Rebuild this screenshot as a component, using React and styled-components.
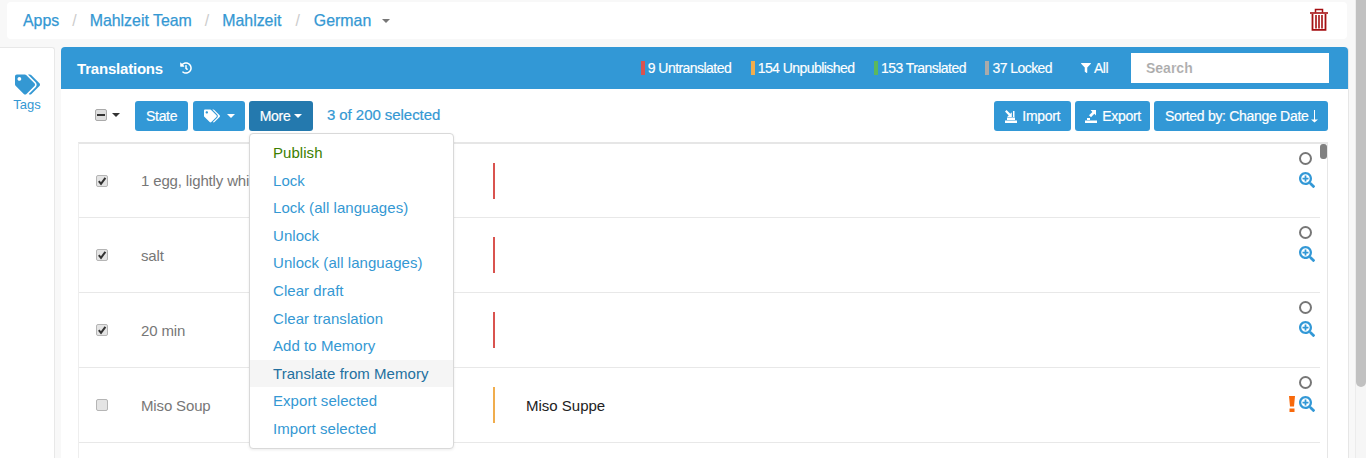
import React from 'react';
import styled, { createGlobalStyle } from 'styled-components';
import { FaTags, FaHistory, FaSearchPlus, FaFilter } from 'react-icons/fa';

const GlobalStyle = createGlobalStyle`
  html, body {
    margin: 0;
    padding: 0;
    height: 458px;
    overflow: hidden;
    background: #f8f8f8;
    font-family: "Liberation Sans", Arial, sans-serif;
    font-size: 15px;
    color: #333;
  }
  * { box-sizing: border-box; }
`;

const Page = styled.div`
  display: flex;
  height: 458px;
  overflow: hidden;
`;

const Content = styled.div`
  width: 1355px;
  flex: none;
  padding-top: 2px;
`;

const PageScroll = styled.div`
  flex: 1;
  background: #f6f6f6;
  border-left: 1px solid #ececec;
`;

const PageThumb = styled.div`
  width: 10px;
  height: 387px;
  background: #c1c1c1;
  border-radius: 0 0 5px 5px;
`;

const Breadcrumb = styled.nav`
  height: 37px;
  margin: 0 8px 0 7px;
  padding: 0 16px;
  background: #fff;
  border-radius: 4px;
  display: flex;
  align-items: center;
  font-size: 15.9px;
  color: #3498d3;
`;

const Crumb = styled.a`
  color: #3498d3;
  -webkit-text-stroke: 0.25px #3498d3;
`;

const Slash = styled.span`
  color: #ccc;
  margin: 0 ${p => p.$gap || 13}px;
`;

const Caret = styled.span`
  display: inline-block;
  width: 0;
  height: 0;
  border-left: 4px solid transparent;
  border-right: 4px solid transparent;
  border-top: 4px solid ${p => p.$color || '#fff'};
  margin-left: ${p => p.$gap || 4}px;
`;

const TrashButton = styled.a`
  margin-left: auto;
  margin-right: 3px;
  margin-top: -3px;
  display: flex;
`;

const Body = styled.div`
  display: flex;
  margin-top: 8px;
  height: 411px;
`;

const Sidebar = styled.aside`
  width: 55px;
  flex: none;
  background: #fff;
  border: 1px solid #e8e8e8;
  border-left: 0;
  border-bottom: 0;
  border-radius: 0 3px 0 0;
  padding-top: 24px;
  display: flex;
  flex-direction: column;
  align-items: center;
  color: #3498d3;
  font-size: 13px;
  margin-right: 6px;
`;

const Panel = styled.section`
  width: 1288px;
  flex: none;
  background: #fff;
  border-right: 1px solid #e6e6e6;
  border-radius: 4px 4px 0 0;
`;

const PanelHead = styled.header`
  height: 42px;
  background: #3298d6;
  border-radius: 4px 4px 0 0;
  padding: 0 19px 0 16px;
  display: flex;
  align-items: center;
  color: #fff;
`;

const Title = styled.h2`
  margin: 0 17px 0 0;
  font-size: 15px;
  font-weight: 700;
  letter-spacing: -0.2px;
`;

const Stats = styled.div`
  margin-left: auto;
  display: flex;
  align-items: center;
  font-size: 14px;
  letter-spacing: -0.55px;
  -webkit-text-stroke: 0.15px #fff;
`;

const Stat = styled.span`
  border-left: 4px solid ${p => p.$color};
  padding-left: 3px;
  margin-right: 19.5px;
  line-height: 14px;
`;

const AllFilter = styled.span`
  display: flex;
  align-items: center;
  gap: 3px;
  margin-left: 9.5px;
  margin-right: 23px;
`;

const Search = styled.input`
  width: 198px;
  height: 30px;
  border: 0;
  padding: 0 15px;
  font: 700 14px "Liberation Sans", Arial, sans-serif;
  background: #fff;
  &::placeholder { color: #aaa; opacity: 1; }
`;

const Toolbar = styled.div`
  height: 53px;
  padding: 12px 21px 0 34px;
  display: flex;
  align-items: flex-start;
  position: relative;
`;

const SelectAll = styled.div`
  display: flex;
  align-items: center;
  height: 28px;
  margin-right: 15px;
`;

const Minus = styled.span`
  width: 12px;
  height: 12px;
  border-radius: 2px;
  background: #dedede;
  border: 1px solid #aaa;
  display: flex;
  align-items: center;
  justify-content: center;
  margin-right: 1px;
  &::after {
    content: '';
    width: 8px;
    height: 2px;
    background: #333;
  }
`;

const Btn = styled.button`
  height: 30px;
  border: 0;
  border-radius: 3px;
  padding: 0 ${p => p.$pad || 10.5}px;
  margin-right: ${p => p.$mr ?? 5}px;
  background: ${p => (p.$active ? '#2479ae' : '#3298d6')};
  color: #fff;
  font: 14px "Liberation Sans", Arial, sans-serif;
  letter-spacing: -0.3px;
  display: flex;
  align-items: center;
  -webkit-text-stroke: 0.2px #fff;
`;

const Selected = styled.span`
  margin-left: 9px;
  line-height: 28px;
  letter-spacing: -0.05px;
  color: #3498d3;
  -webkit-text-stroke: 0.2px #3498d3;
`;

const Right = styled.div`
  margin-left: auto;
  margin-right: -1px;
  display: flex;
`;

const Menu = styled.ul`
  position: absolute;
  left: 188px;
  top: 44px;
  width: 205px;
  margin: 0;
  padding: 5px 0;
  list-style: none;
  background: #fff;
  border: 1px solid #d9d9d9;
  border-radius: 4px;
  box-shadow: 0 1px 3px rgba(0, 0, 0, 0.08);
  z-index: 5;
`;

const MenuItem = styled.li`
  height: 27.6px;
  line-height: 28.5px;
  padding-left: 23px;
  white-space: nowrap;
  letter-spacing: 0.05px;
  color: ${p => (p.$green ? '#3c8000' : p.$hover ? '#23709f' : '#3498d3')};
  background: ${p => (p.$hover ? '#f5f5f5' : 'transparent')};
`;

const List = styled.div`
  margin: 0 20px 0 17px;
  border-top: 2px solid #e6e6e6;
  border-left: 1px solid #eee;
  border-right: 1px solid #e6e6e6;
  height: 316px;
  display: flex;
`;

const Rows = styled.div`
  flex: 1;
  min-width: 0;
`;

const Row = styled.div`
  height: 75px;
  border-bottom: 1px solid #e8e8e8;
  display: flex;
  align-items: center;
  &:first-child { height: 74px; }
`;

const CheckCell = styled.div`
  width: 62px;
  flex: none;
  padding-left: 17px;
  display: flex;
`;

const Check = styled.span`
  width: 12px;
  height: 12px;
  border-radius: 2px;
  background: #e4e4e4;
  border: 1px solid #b5b5b5;
  display: flex;
`;

const Source = styled.div`
  width: 352px;
  flex: none;
  letter-spacing: -0.15px;
  color: #777;
`;

const Bar = styled.span`
  width: 2px;
  height: 36px;
  flex: none;
  background: ${p => p.$color};
`;

const Target = styled.div`
  flex: 1;
  padding-left: 31px;
  color: #222;
`;

const Actions = styled.div`
  width: 40px;
  flex: none;
  padding-right: 5px;
  display: flex;
  flex-direction: column;
  align-items: flex-end;
  gap: 7px;
  margin-top: -22px;
`;

const Ring = styled.span`
  width: 13px;
  height: 13px;
  border: 2px solid #777;
  border-radius: 50%;
  margin-right: 3px;
`;

const Zoomers = styled.div`
  display: flex;
  align-items: center;
  gap: 4px;
  color: #3298d6;
`;

const ListScroll = styled.div`
  width: 7px;
  flex: none;
`;

const ListThumb = styled.div`
  height: 15px;
  background: #808080;
  border-radius: 3px;
`;

const TrashIcon = () => (
  <svg width="18" height="23" viewBox="0 0 18 23" fill="none" stroke="#a50f12">
    <path d="M0 5h18" strokeWidth="1.6" />
    <path d="M5.500 4.500V1.500h7v3" strokeWidth="1.500" />
    <path d="M2.500 6v15.800h13V6" strokeWidth="1.800" />
    <path d="M6 7v13.500M9 7v13.500M12 7v13.500" strokeWidth="1.600" />
  </svg>
);

const TickIcon = () => (
  <svg width="10" height="10" viewBox="0 0 10 10">
    <path d="M1.800 5.200 4 7.800 8.400 1.800" fill="none" stroke="#333" strokeWidth="2" />
  </svg>
);

const WarnIcon = () => (
  <svg width="6" height="16" viewBox="0 0 6 16" fill="#f8690b">
    <path d="M0 0h6L5 10.500H1zM0.500 12.500h5V16h-5z" />
  </svg>
);

const ImportIcon = () => (
  <svg width="14" height="14" viewBox="0 0 14 14" fill="#fff" style={{ marginRight: 4 }}>
    <path d="M1 11.500h12V14H1zM3 8.500h8V11H3z" />
    <path d="M2.500 1 6.300 4.800 7.800 3.300V8H3.100l1.600-1.600L1 2.500z" />
    <path d="M9 2h1.500v6H9z" />
  </svg>
);

const ExportIcon = () => (
  <svg width="14" height="14" viewBox="0 0 14 14" fill="#fff" style={{ marginRight: 4 }}>
    <path d="M1 11.500h12V14H1zM3 9h3v2H3z" />
    <path d="M12 1v5.500l-1.700-1.700-3.300 3.500-2-2 3.400-3.400L6.600 1z" />
  </svg>
);

const ArrowDown = () => (
  <svg width="7" height="14" viewBox="0 0 7 14" fill="#fff" style={{ marginLeft: 2 }}>
    <path d="M3 1h1v9.500h3L3.500 13.500 0 10.500h3z" />
  </svg>
);

// first row is cut by the open menu in the picture, only the visible part is kept
const rows = [
  { text: '1 egg, lightly whi', bar: '#d9534f', checked: true },
  { text: 'salt', bar: '#d9534f', checked: true },
  { text: '20 min', bar: '#d9534f', checked: true },
  { text: 'Miso Soup', bar: '#f0ad4e', target: 'Miso Suppe', warn: true },
];

const menu = [
  'Lock',
  'Lock (all languages)',
  'Unlock',
  'Unlock (all languages)',
  'Clear draft',
  'Clear translation',
  'Add to Memory',
];

export default function App() {
  return (
    <Page>
      <GlobalStyle />
      <Content>
        <Breadcrumb>
          <Crumb>Apps</Crumb>
          <Slash>/</Slash>
          <Crumb>Mahlzeit Team</Crumb>
          <Slash>/</Slash>
          <Crumb>Mahlzeit</Crumb>
          <Slash $gap={14}>/</Slash>
          <Crumb>German</Crumb>
          <Caret $color="#777" $gap={11} />
          <TrashButton>
            <TrashIcon />
          </TrashButton>
        </Breadcrumb>
        <Body>
          <Sidebar>
            <FaTags size={25} />
            <span>Tags</span>
          </Sidebar>
          <Panel>
            <PanelHead>
              <Title>Translations</Title>
              <FaHistory size={12} />
              <Stats>
                <Stat $color="#d9534f">9 Untranslated</Stat>
                <Stat $color="#f0ad4e">154 Unpublished</Stat>
                <Stat $color="#5cb85c">153 Translated</Stat>
                <Stat $color="#aaa">37 Locked</Stat>
                <AllFilter>
                  <FaFilter size={10} />
                  All
                </AllFilter>
                <Search placeholder="Search" />
              </Stats>
            </PanelHead>
            <Toolbar>
              <SelectAll>
                <Minus />
                <Caret $color="#333" />
              </SelectAll>
              <Btn $pad={11}>State</Btn>
              <Btn $mr={4}>
                <FaTags size={16} />
                <Caret $gap={7} />
              </Btn>
              <Btn $active>
                More
                <Caret />
              </Btn>
              <Selected>3 of 200 selected</Selected>
              <Right>
                <Btn $mr={4}>
                  <ImportIcon />
                  Import
                </Btn>
                <Btn $pad={9.5} $mr={4}>
                  <ExportIcon />
                  Export
                </Btn>
                <Btn $mr={0}>
                  Sorted by: Change Date
                  <ArrowDown />
                </Btn>
              </Right>
              <Menu>
                <MenuItem $green>Publish</MenuItem>
                {menu.map(m => (
                  <MenuItem key={m}>{m}</MenuItem>
                ))}
                <MenuItem $hover>Translate from Memory</MenuItem>
                <MenuItem>Export selected</MenuItem>
                <MenuItem>Import selected</MenuItem>
              </Menu>
            </Toolbar>
            <List>
              <Rows>
                {rows.map(r => (
                  <Row key={r.text}>
                    <CheckCell>
                      <Check>{r.checked && <TickIcon />}</Check>
                    </CheckCell>
                    <Source>{r.text}</Source>
                    <Bar $color={r.bar} />
                    <Target>{r.target}</Target>
                    <Actions>
                      <Ring />
                      <Zoomers>
                        {r.warn && <WarnIcon />}
                        <FaSearchPlus size={16} />
                      </Zoomers>
                    </Actions>
                  </Row>
                ))}
              </Rows>
              <ListScroll>
                <ListThumb />
              </ListScroll>
            </List>
          </Panel>
        </Body>
      </Content>
      <PageScroll>
        <PageThumb />
      </PageScroll>
    </Page>
  );
}
